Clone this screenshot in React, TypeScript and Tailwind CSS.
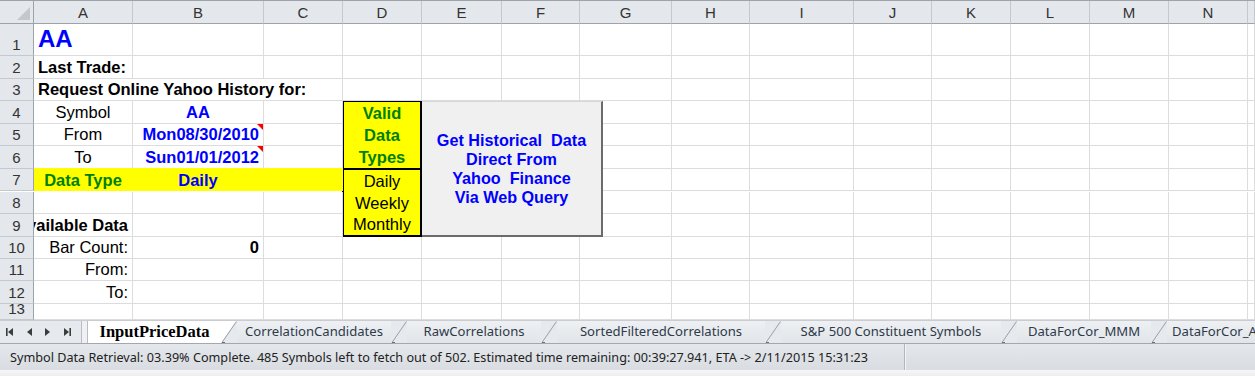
import React from "react";

const COLS = ["A", "B", "C", "D", "E", "F", "G", "H", "I", "J", "K", "L", "M", "N", ""];
const ROW_H = ["h-[32px]", "h-[23px]", "h-[22px]", "h-[23px]", "h-[22px]", "h-[23px]", "h-[22px]", "h-[22px]", "h-[23px]", "h-[22px]", "h-[22px]", "h-[23px]", "h-[16px]"];

const BLUE = "text-[#0000ff]";
const GREEN = "text-[#008000]";

type Cell = {
  text?: string;
  cls?: string;
  span?: string;
  skip?: boolean;
  comment?: boolean;
};

// cell overrides keyed like "B5"
const CELLS: Record<string, Cell> = {
  A1: { text: "AA", cls: `font-bold text-[24px] ${BLUE} items-end pl-[4px] leading-none pb-[4px]` },
  A2: { text: "Last Trade:", cls: "font-bold pl-[4px]" },
  A3: { text: "Request Online Yahoo History for:", cls: "font-bold pl-[4px]", span: "col-span-3" },
  B3: { skip: true },
  C3: { skip: true },
  A4: { text: "Symbol", cls: "justify-center" },
  B4: { text: "AA", cls: `justify-center font-bold ${BLUE}` },
  A5: { text: "From", cls: "justify-center" },
  B5: { text: "Mon08/30/2010", cls: `justify-end pr-[4px] font-bold ${BLUE}`, comment: true },
  A6: { text: "To", cls: "justify-center border-b-[#ffff00]" },
  B6: { text: "Sun01/01/2012", cls: `justify-end pr-[4px] font-bold ${BLUE} border-b-[#ffff00]`, comment: true },
  C6: { cls: "border-b-[#ffff00]" },
  A7: { text: "Data Type", cls: `justify-center font-bold ${GREEN} bg-[#ffff00] border-[#ffff00]` },
  B7: { text: "Daily", cls: `justify-center font-bold ${BLUE} bg-[#ffff00] border-[#ffff00]` },
  C7: { cls: "bg-[#ffff00] border-[#ffff00]" },
  A9: { text: "Available Data", cls: "justify-end pr-[4px] font-bold" },
  A10: { text: "Bar Count:", cls: "justify-end pr-[4px]" },
  B10: { text: "0", cls: "justify-end pr-[4px] font-bold" },
  A11: { text: "From:", cls: "justify-end pr-[4px]" },
  A12: { text: "To:", cls: "justify-end pr-[4px]" },
};

function CornerCell() {
  return (
    <div className="relative bg-[#e4e7eb] border-r border-b border-[#9ea3aa]">
      <svg className="absolute right-[3px] bottom-[3px]" width="13" height="13" viewBox="0 0 13 13">
        <polygon points="13,0 13,13 0,13" fill="#c4c8cd" />
      </svg>
    </div>
  );
}

function DBox() {
  return (
    <div className="col-start-5 row-start-5 row-span-6 flex flex-col ml-[-1px] mt-[-1px] border-2 border-black bg-[#ffff00] text-[16.5px] overflow-hidden">
      <div className="flex flex-col items-center font-bold text-[#008000] border-b-2 border-black">
        <div className="h-[22px] flex items-center">Valid</div>
        <div className="h-[22px] flex items-center">Data</div>
        <div className="h-[22px] flex items-center">Types</div>
      </div>
      <div className="flex flex-col items-center text-black whitespace-nowrap">
        <div className="h-[22px] flex items-center">Daily</div>
        <div className="h-[22px] flex items-center">Weekly</div>
        <div className="h-[21px] flex items-center">Monthly</div>
      </div>
    </div>
  );
}

function Sheet() {
  const rows: React.ReactNode[] = [];

  // header row
  rows.push(<CornerCell key="corner" />);
  COLS.forEach((c) => {
    rows.push(
      <div
        key={"h" + c}
        className="h-[23px] bg-[#e4e7eb] border-r border-r-[#c5c9ce] border-b border-b-[#9ea3aa] flex items-center justify-center text-[15px] text-[#333]"
      >
        {c}
      </div>
    );
  });

  for (let r = 1; r <= 13; r++) {
    rows.push(
      <div
        key={"r" + r}
        className={`${ROW_H[r - 1]} bg-[#e4e7eb] border-r border-r-[#9ea3aa] border-b border-b-[#c5c9ce] flex items-end justify-center pb-[1px] text-[15px] text-[#333] leading-[18px] overflow-hidden`}
      >
        {r}
      </div>
    );
    COLS.forEach((c) => {
      const id = c + r;
      if (c === "D" && r >= 4 && r <= 9) return;
      const cell = CELLS[id];
      if (cell?.skip) return;
      rows.push(
        <div
          key={id}
          className={`relative ${ROW_H[r - 1]} flex items-center whitespace-nowrap overflow-hidden border-r border-b border-[#dadcdd] ${cell?.span ?? ""} ${cell?.cls ?? ""}`}
        >
          {cell?.text}
          {cell?.comment && (
            <svg className="absolute right-0 top-0" width="6" height="6" viewBox="0 0 6 6">
              <polygon points="0,0 6,0 6,6" fill="#ff0000" />
            </svg>
          )}
        </div>
      );
    });
  }

  return (
    <div className="relative border-t border-[#9ea3aa]">
      <div className="grid grid-cols-[34px_99px_131px_79px_79px_80px_78px_92px_78px_104px_78px_79px_79px_79px_79px_1fr] text-[16.5px] text-black leading-none">
        {rows}
        <DBox />
      </div>
      {/* form button floating over the sheet */}
      <div className="absolute left-[422px] top-[100px] w-[181px] h-[136px] bg-[#f0f0f0] border-t border-t-[#d8d8d8] border-r-2 border-r-[#6b6b6b] border-b-2 border-b-[#6b6b6b] flex flex-col items-center justify-center font-bold text-[#0000ff] text-[16.2px] leading-[19px] whitespace-pre">
        <div>Get Historical  Data</div>
        <div>Direct From</div>
        <div>Yahoo  Finance</div>
        <div>Via Web Query</div>
      </div>
    </div>
  );
}

function NavArrow({ dir, bar }: { dir: "l" | "r"; bar?: boolean }) {
  return (
    <svg width="10" height="10" viewBox="0 0 10 10">
      {dir === "l" ? (
        <>
          {bar && <rect x="1" y="1" width="1.6" height="8" fill="#3c3c3c" />}
          <polygon points="8,1 8,9 3,5" fill="#3c3c3c" />
        </>
      ) : (
        <>
          <polygon points="2,1 2,9 7,5" fill="#3c3c3c" />
          {bar && <rect x="7.4" y="1" width="1.6" height="8" fill="#3c3c3c" />}
        </>
      )}
    </svg>
  );
}

function Slant({ white }: { white?: boolean }) {
  return (
    <svg width="16" height="22" viewBox="0 0 16 22" className="shrink-0">
      {white && <polygon points="0,0 15,0 0,22" fill="#ffffff" />}
      <line x1="1" y1="21.5" x2="15.5" y2="0.5" stroke="#9a9ea4" strokeWidth="1" />
      <line x1="1" y1="21.5" x2="4" y2="21.5" stroke="#6e7278" strokeWidth="1" />
    </svg>
  );
}

const TABS = [
  { name: "CorrelationCandidates", w: "w-[154px]" },
  { name: "RawCorrelations", w: "w-[134px]" },
  { name: "SortedFilteredCorrelations", w: "w-[208px]" },
  { name: "S&P 500 Constituent Symbols", w: "w-[220px]" },
  { name: "DataForCor_MMM", w: "w-[134px]" },
];

function TabBar() {
  return (
    <div className="h-[23px] flex bg-[#e6e9ed] border-t border-[#c9ccd1] overflow-hidden font-['Noto_Sans',sans-serif]">
      <div className="w-[88px] shrink-0 flex items-center">
        <div className="flex items-center gap-[9px] pl-[5px]">
          <NavArrow dir="l" bar />
          <NavArrow dir="l" />
          <NavArrow dir="r" />
          <NavArrow dir="r" bar />
        </div>
        <div className="ml-auto h-full w-[7px] border-l border-r border-[#b9bdc2] bg-[#eef0f3]" />
      </div>
      <div className="w-[133px] shrink-0 bg-white flex items-center justify-center font-['Liberation_Serif',serif] font-bold text-[16.5px] text-black">
        InputPriceData
      </div>
      <Slant white />
      {TABS.map((t) => (
        <React.Fragment key={t.name}>
          <div className={`${t.w} shrink-0 flex items-center justify-center whitespace-nowrap text-[13.1px] text-[#2e3a4a] bg-gradient-to-b from-[#eef0f3] to-[#e2e5e9]`}>
            {t.name}
          </div>
          <Slant />
        </React.Fragment>
      ))}
      <div className="flex-1 flex items-center pl-[5px] text-[13.1px] text-[#2e3a4a] whitespace-nowrap bg-gradient-to-b from-[#eef0f3] to-[#e2e5e9]">
        DataForCor_AAPL
      </div>
    </div>
  );
}

function StatusBar() {
  return (
    <div className="h-[27px] flex bg-gradient-to-b from-[#e4e7eb] to-[#d9dde2] border-t border-[#a4a8ad] font-['Noto_Sans',sans-serif] text-[12.65px] text-[#222]">
      <div className="w-[905px] shrink-0 flex items-center pl-[10px] whitespace-nowrap border-r border-[#b3b7bc]">
        Symbol Data Retrieval: 03.39% Complete. 485 Symbols left to fetch out of 502. Estimated time remaining: 00:39:27.941, ETA -&gt; 2/11/2015 15:31:23
      </div>
      <div className="flex-1 border-l border-[#f3f4f6]" />
    </div>
  );
}

export default function App() {
  return (
    <div className="w-[1255px] h-[376px] overflow-hidden bg-white font-['Liberation_Sans',Arial,sans-serif]">
      <Sheet />
      <TabBar />
      <StatusBar />
      <div className="h-[8px] bg-gradient-to-b from-[#f7f7f7] to-[#ececec] border-b border-[#3c3c3c]" />
    </div>
  );
}
